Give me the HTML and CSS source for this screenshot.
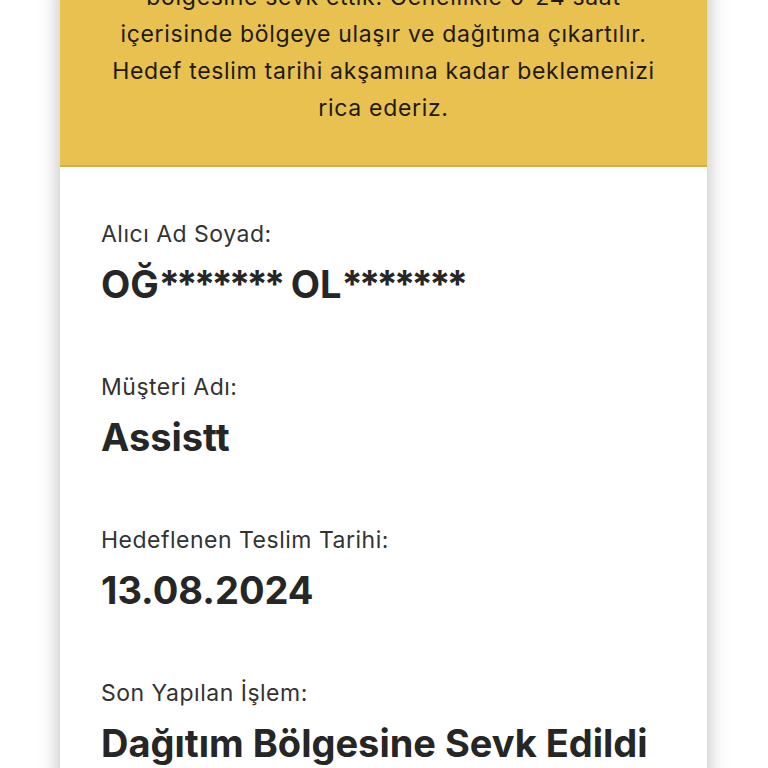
FILE: index.html
```html
<!DOCTYPE html>
<html lang="tr">
<head>
<meta charset="utf-8">
<link rel="stylesheet" href="styles.css">
</head>
<body>
<div class="page">
  <div class="card">
    <div class="notice">
      <p class="notice-text">bölgesine sevk ettik. Genellikle 0-24 saat<br>içerisinde bölgeye ulaşır ve dağıtıma çıkartılır.<br>Hedef teslim tarihi akşamına kadar beklemenizi<br>rica ederiz.</p>
    </div>
    <div class="details">
      <div class="field">
        <div class="label">Alıcı Ad Soyad:</div>
        <div class="value">OĞ<span class="mask">*******</span> OL<span class="mask">*******</span></div>
      </div>
      <div class="field">
        <div class="label">Müşteri Adı:</div>
        <div class="value">Assistt</div>
      </div>
      <div class="field">
        <div class="label">Hedeflenen Teslim Tarihi:</div>
        <div class="value">13.08.2024</div>
      </div>
      <div class="field">
        <div class="label">Son Yapılan İşlem:</div>
        <div class="value">Dağıtım Bölgesine Sevk Edildi</div>
      </div>
    </div>
  </div>
</div>
</body>
</html>
```
FILE: styles.css
```css
html, body {
  margin: 0;
  padding: 0;
  background: #ffffff;
  overflow: hidden;
}
.page {
  width: 768px;
  height: 768px;
  overflow: hidden;
  padding-left: 60px;
  box-sizing: border-box;
}
.card {
  width: 647px;
  margin-top: -21px;
  background: #ffffff;
  box-shadow: 0 0 20px rgba(0,0,0,0.28);
}
.notice {
  background: #e8c150;
  border-bottom: 2px solid #d4ae48;
  padding: 0 10px 38px;
}
.notice-text {
  margin: 0;
  text-align: center;
  font-family: "Inter", "Liberation Sans", sans-serif;
  font-size: 23px;
  letter-spacing: 0.68px;
  line-height: 37px;
  color: #1e1a10;
  white-space: nowrap;
}
.details {
  padding: 52px 41px 40px;
  display: flex;
  flex-direction: column;
  gap: 66px;
}
.field {
  display: flex;
  flex-direction: column;
  gap: 13px;
}
.label {
  font-family: "Inter", "Liberation Sans", sans-serif;
  font-size: 23px;
  letter-spacing: 0.5px;
  line-height: 30px;
  color: #333333;
}
.value {
  font-family: "Inter", "Liberation Sans", sans-serif;
  font-size: 38px;
  line-height: 44px;
  font-weight: 700;
  color: #262626;
}
.mask {
  letter-spacing: -3.7px;
}
```
